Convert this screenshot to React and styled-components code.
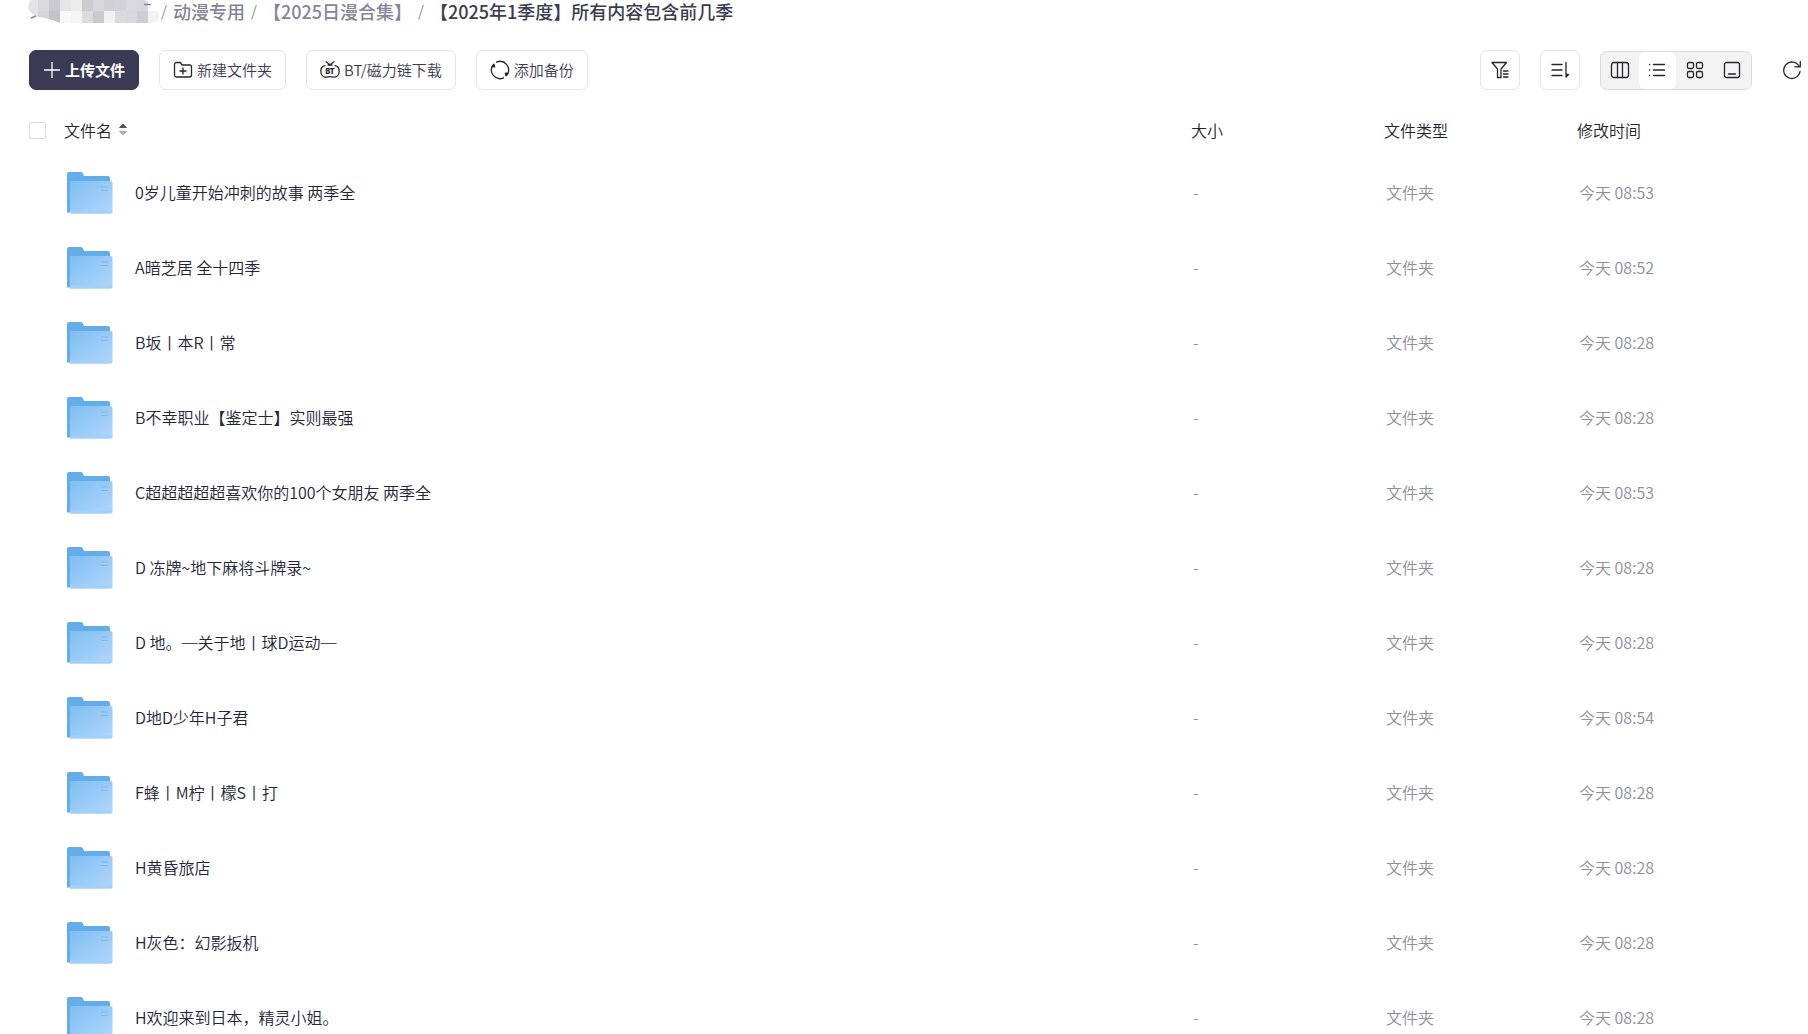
import { useState } from 'react';
import styled, { createGlobalStyle } from 'styled-components';

const GlobalStyle = createGlobalStyle`
  * {
    box-sizing: border-box;
  }

  html,
  body {
    margin: 0;
    height: 100%;
    overflow: hidden;
  }

  body,
  button {
    font-family: 'Noto Sans CJK SC', sans-serif;
    font-weight: 350;
  }

  body {
    background-color: #fff;
    color: #25262b;
    font-size: 16px;
    line-height: 24px;
  }
`;

const Page = styled.main`
  display: flex;
  flex-direction: column;
`;

const Breadcrumb = styled.nav`
  display: flex;
  align-items: flex-start;
  height: 24px;
  padding-left: 28px;
  font-size: 18px;
  font-weight: 500;
  line-height: 22px;
  white-space: nowrap;
`;

const Crumb = styled.a`
  display: flex;
  color: #84859a;
  text-decoration: none;

  &[aria-current] {
    color: #3b3b52;
  }
`;

const Separator = styled.span`
  width: 18px;
  color: #84858f;
  font-size: 15px;
  font-weight: 350;
  text-align: center;
`;

const Toolbar = styled.div`
  display: flex;
  justify-content: space-between;
  align-items: center;
  margin-top: 26px;
  padding: 0 6px 0 29px;
`;

const Group = styled.div`
  display: flex;
  align-items: center;
  gap: 20px;
`;

const Button = styled.button`
  display: flex;
  justify-content: center;
  align-items: center;
  gap: 4px;
  height: 40px;
  padding: 0 13px 1px;
  border: 1px solid #e4e4e8;
  border-radius: 7px;
  background-color: #fff;
  color: #3b3b4f;
  font-size: 15px;
  white-space: nowrap;
  cursor: pointer;
`;

const PrimaryButton = styled(Button)`
  border-color: #3a3a54;
  background-color: #3a3a54;
  color: #fff;
  font-weight: 700;
`;

const IconButton = styled(Button)`
  width: 40px;
  padding: 0;
`;

const PlainButton = styled(IconButton)`
  width: 20px;
  margin-left: 10px;
  border: 0;
`;

const ViewSwitch = styled.div`
  display: flex;
  width: 152px;
  height: 39px;
  overflow: hidden;
  border: 1px solid #dcdcdf;
  border-radius: 7px;
  background-color: #f3f3f4;
`;

const ViewButton = styled.button`
  display: flex;
  flex: 1;
  justify-content: center;
  align-items: center;
  padding: 0;
  border: 0;
  border-radius: 6px;
  background-color: ${({ $active }) => ($active ? '#fff' : 'transparent')};
  cursor: pointer;
`;

const Icon = styled.svg`
  display: block;
  flex: none;
  fill: none;
  stroke: ${({ $color }) => $color || '#25262b'};
  stroke-width: 1.3;
  stroke-linecap: round;
  stroke-linejoin: round;
`;

const FileTable = styled.table`
  width: 100%;
  margin-top: 16px;
  border-collapse: collapse;
  table-layout: fixed;
`;

const HeadCell = styled.th`
  width: ${({ $width }) => $width || 'auto'};
  height: 48px;
  padding: 0;
  font-weight: inherit;
  text-align: left;
`;

const NameHead = styled.div`
  display: flex;
  align-items: center;
  padding-left: 29px;
`;

const Checkbox = styled.input`
  width: 17px;
  height: 17px;
  margin: 0 18px 0 0;
  border: 1px solid #d9d9de;
  border-radius: 2px;
  background-color: #fff;
  appearance: none;

  &:checked {
    background-color: #3a3a54;
  }
`;

const SortButton = styled.button`
  display: flex;
  align-items: center;
  gap: 6px;
  padding: 0;
  border: 0;
  background: none;
  color: inherit;
  font-size: 16px;
  line-height: 24px;
  cursor: pointer;
`;

const Cell = styled.td`
  height: 75px;
  padding: 0 0 0 2px;
  color: #8e8f9b;
`;

const NameCell = styled.div`
  display: flex;
  align-items: center;
  gap: 22px;
  padding-left: 63px;
  color: #25253a;
`;

const TILES = [
  [0, 0, '#e4e4e7'],
  [10, 0, '#dadadd'],
  [21, 0, '#c9c9ce'],
  [32, 0, '#e5e5e8'],
  [43, 0, '#ececee'],
  [54, 0, '#cbcbd0'],
  [65, 0, '#d9d9dd'],
  [76, 0, '#cfcfd4'],
  [87, 0, '#d2d2d7'],
  [98, 0, '#dadade'],
  [109, 0, '#d6d6db'],
  [0, 11, '#e2e3e8'],
  [10, 11, '#d4d5da'],
  [21, 11, '#c3c4ca'],
  [32, 11, '#f8f8f8'],
  [43, 11, '#f4f4f5'],
  [54, 11, '#dcdce0'],
  [65, 11, '#c9c9cf'],
  [76, 11, '#f2f2f3'],
  [87, 11, '#dadade'],
  [98, 11, '#d7d7dc'],
  [109, 11, '#cdced4'],
  [120, 11, '#f2f2f3'],
];

const Mosaic = () => (
  <svg width="127" height="24" viewBox="0 0 127 24" overflow="visible" aria-hidden="true">
    <clipPath id="mosaic">
      <path d="M0 8Q1 0 4 0H116Q130 5 131 16Q130 23 124 23H32Q20 18 10 17Q2 14 0 8Z" />
    </clipPath>
    <g clipPath="url(#mosaic)">
      {TILES.map(([x, y, fill]) => (
        <rect key={`${x}-${y}`} x={x} y={y} width="11" height="12" fill={fill} />
      ))}
    </g>
    <path d="M3 18L8 16M116 4.500H123" stroke="#84859a" strokeWidth="1.400" fill="none" />
  </svg>
);

const PlusIcon = () => (
  <Icon width="18" height="18" viewBox="0 0 18 18" $color="#fff">
    <path d="M9 1.500v15M1.500 9h15" />
  </Icon>
);

const NewFolderIcon = () => (
  <Icon width="20" height="18" viewBox="0 0 20 18">
    <path d="M1.500 14V3.500a2 2 0 0 1 2-2h3.700l2 2.500h7.300a2 2 0 0 1 2 2v8a2 2 0 0 1-2 2h-13a2 2 0 0 1-2-2z" />
    <path d="M10 7v6M7 10h6" />
  </Icon>
);

const BtIcon = () => (
  <Icon width="20" height="18" viewBox="0 0 20 18">
    <path d="M5 4.700C2.300 5.300.8 7.500.8 10.200c0 3.500 2.400 6 5.500 6 1.500 0 2.300-.5 3.700-.5s2.200.5 3.700.5c3.100 0 5.500-2.500 5.500-6 0-2.700-1.500-4.900-4.200-5.500" />
    <path d="M6 .8L10 3.800L14 .8M8 4h4" />
    <text
      x="10"
      y="13"
      fill="#25262b"
      stroke="none"
      textAnchor="middle"
      fontFamily="Inter, sans-serif"
      fontSize="7"
      fontWeight="900"
    >
      BT
    </text>
  </Icon>
);

const BackupIcon = () => (
  <Icon width="20" height="20" viewBox="0 0 20 20">
    <path d="M6.500 2.200A8.500 8.500 0 0 1 17.200 14.500M13.500 17.800A8.500 8.500 0 0 1 2.800 5.500" />
    <path d="M2 6.500L4 4.300l.6 2.600zM18 13.500l-2 2.200-.6-2.600z" fill="#25262b" />
  </Icon>
);

const FilterIcon = () => (
  <Icon width="20" height="20" viewBox="0 0 20 20">
    <path d="M2 2.500h14.500L11 9v8.500H7.500V9z" />
    <path d="M13.500 11H18M13.500 14H18M13.500 17H18" />
  </Icon>
);

const SortIcon = () => (
  <Icon width="20" height="20" viewBox="0 0 20 20">
    <path d="M2 4.500h10M2 10h10M2 15.500h10M16 2.500V17l2.500-2.500H16" />
  </Icon>
);

const ColumnsIcon = () => (
  <Icon width="20" height="20" viewBox="0 0 20 20">
    <rect x="1.500" y="2.500" width="17" height="15" rx="2.500" />
    <path d="M7.500 2.500v15M12.500 2.500v15" />
  </Icon>
);

const ListIcon = () => (
  <Icon width="20" height="20" viewBox="0 0 20 20">
    <path d="M6.500 4.500h11M6.500 10h11M6.500 15.500h11M2.500 4.500h.2M2.500 10h.2M2.500 15.500h.2" />
  </Icon>
);

const GridIcon = () => (
  <Icon width="20" height="20" viewBox="0 0 20 20">
    <rect x="2.500" y="2.500" width="6" height="6" rx="1.500" />
    <rect x="11.500" y="2.500" width="6" height="6" rx="1.500" />
    <rect x="2.500" y="11.500" width="6" height="6" rx="1.500" />
    <rect x="11.500" y="11.500" width="6" height="6" rx="1.500" />
  </Icon>
);

const PreviewIcon = () => (
  <Icon width="20" height="20" viewBox="0 0 20 20">
    <rect x="2.500" y="2.500" width="15" height="15" rx="2" />
    <path d="M6.500 14h7" />
  </Icon>
);

const RefreshIcon = () => (
  <Icon width="20" height="20" viewBox="0 0 20 20">
    <path d="M18 11.500A8.200 8.200 0 1 1 17.200 6.500M18.300 1.500v5.300h-5.500" />
  </Icon>
);

const SortArrows = () => (
  <svg width="10" height="16" viewBox="0 0 10 16" aria-hidden="true">
    <path d="M5 2L8.500 5.500H1.500z" fill="#55565c" stroke="#55565c" strokeLinejoin="round" />
    <path d="M5 13L8.500 9.500H1.500z" fill="#b0b0b4" stroke="#b0b0b4" strokeLinejoin="round" />
  </svg>
);

const FolderIcon = () => (
  <svg width="48" height="44" viewBox="0 0 48 44" aria-hidden="true">
    <defs>
      <linearGradient id="front" x1="0" y1="0" x2="1" y2="1">
        <stop offset="0" stopColor="#80bef3" />
        <stop offset="1" stopColor="#b0d7fc" />
      </linearGradient>
    </defs>
    <path d="M2 42.500V4q0-2 2-2h12q1.500 0 2 1.500l1 2.500h24q2 0 2 2v34.500z" fill="#62adea" />
    <path d="M5 11h40.500q2 0 2 2v28q0 2.500-2 2.500H5z" fill="url(#front)" />
    <path d="M5 40.500h42.500v.5q0 2.500-2 2.500H5z" fill="#a3cff8" />
    <path d="M36 17h7M36 20.500h7" stroke="#7fbaf0" />
  </svg>
);

const VIEWS = [
  { key: 'columns', label: '分栏', icon: ColumnsIcon },
  { key: 'list', label: '列表', icon: ListIcon },
  { key: 'grid', label: '宫格', icon: GridIcon },
  { key: 'preview', label: '预览', icon: PreviewIcon },
];

const FILES = [
  { name: '0岁儿童开始冲刺的故事 两季全', time: '今天 08:53' },
  { name: 'A暗芝居 全十四季', time: '今天 08:52' },
  { name: 'B坂丨本R丨常', time: '今天 08:28' },
  { name: 'B不幸职业【鉴定士】实则最强', time: '今天 08:28' },
  { name: 'C超超超超超喜欢你的100个女朋友 两季全', time: '今天 08:53' },
  { name: 'D 冻牌~地下麻将斗牌录~', time: '今天 08:28' },
  { name: 'D 地。─关于地丨球D运动─', time: '今天 08:28' },
  { name: 'D地D少年H子君', time: '今天 08:54' },
  { name: 'F蜂丨M柠丨檬S丨打', time: '今天 08:28' },
  { name: 'H黄昏旅店', time: '今天 08:28' },
  { name: 'H灰色：幻影扳机', time: '今天 08:28' },
  { name: 'H欢迎来到日本，精灵小姐。', time: '今天 08:28' },
];

const App = () => {
  const [view, setView] = useState('list');

  return (
    <Page lang="zh-CN">
      <GlobalStyle />

      <Breadcrumb>
        <Crumb href="#root" aria-label="上级目录">
          <Mosaic />
        </Crumb>
        <Separator>/</Separator>
        <Crumb href="#anime">动漫专用</Crumb>
        <Separator>/</Separator>
        <Crumb href="#2025">【2025日漫合集】</Crumb>
        <Separator>/</Separator>
        <Crumb href="#season" aria-current="page">
          【2025年1季度】所有内容包含前几季
        </Crumb>
      </Breadcrumb>

      <Toolbar>
        <Group>
          <PrimaryButton>
            <PlusIcon />
            上传文件
          </PrimaryButton>
          <Button>
            <NewFolderIcon />
            新建文件夹
          </Button>
          <Button>
            <BtIcon />
            BT/磁力链下载
          </Button>
          <Button>
            <BackupIcon />
            添加备份
          </Button>
        </Group>

        <Group>
          <IconButton aria-label="筛选">
            <FilterIcon />
          </IconButton>
          <IconButton aria-label="排序">
            <SortIcon />
          </IconButton>
          <ViewSwitch>
            {VIEWS.map(({ key, label, icon: ViewIcon }) => (
              <ViewButton
                key={key}
                aria-label={label}
                aria-pressed={view === key}
                $active={view === key}
                onClick={() => setView(key)}
              >
                <ViewIcon />
              </ViewButton>
            ))}
          </ViewSwitch>
          <PlainButton aria-label="刷新">
            <RefreshIcon />
          </PlainButton>
        </Group>
      </Toolbar>

      <FileTable>
        <thead>
          <tr>
            <HeadCell>
              <NameHead>
                <Checkbox type="checkbox" aria-label="全选" />
                <SortButton>
                  文件名
                  <SortArrows />
                </SortButton>
              </NameHead>
            </HeadCell>
            <HeadCell $width="193px">大小</HeadCell>
            <HeadCell $width="193px">文件类型</HeadCell>
            <HeadCell $width="231px">修改时间</HeadCell>
          </tr>
        </thead>
        <tbody>
          {FILES.map(({ name, time }) => (
            <tr key={name}>
              <Cell>
                <NameCell>
                  <FolderIcon />
                  {name}
                </NameCell>
              </Cell>
              <Cell>-</Cell>
              <Cell>文件夹</Cell>
              <Cell>{time}</Cell>
            </tr>
          ))}
        </tbody>
      </FileTable>
    </Page>
  );
};

export default App;
